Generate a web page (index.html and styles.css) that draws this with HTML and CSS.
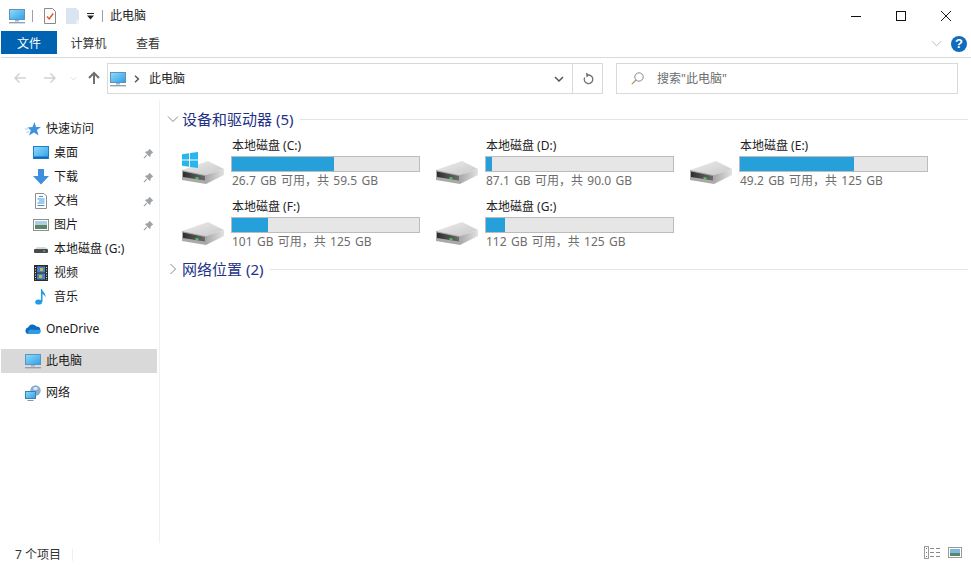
FILE: index.html
```html
<!DOCTYPE html>
<html lang="zh-CN">
<head>
<meta charset="utf-8">
<title>此电脑</title>
<link rel="stylesheet" href="styles.css">
</head>
<body>
<svg class="defs" width="0" height="0" aria-hidden="true">
  <defs>
    <linearGradient id="scr" x1="0" y1="0" x2="1" y2="1"><stop offset="0" stop-color="#8fdcfb"/><stop offset="1" stop-color="#2f9fe8"/></linearGradient>
    <linearGradient id="top" x1="0" y1="0" x2="1" y2="1"><stop offset="0" stop-color="#ededed"/><stop offset="1" stop-color="#c8c8c8"/></linearGradient>
    <linearGradient id="front" x1="0" y1="0" x2="1" y2="0"><stop offset="0" stop-color="#2e2e2e"/><stop offset="1" stop-color="#6a6a6a"/></linearGradient>
    <linearGradient id="side" x1="0" y1="0" x2="1" y2="0"><stop offset="0" stop-color="#a8a8a8"/><stop offset="1" stop-color="#e2e2e2"/></linearGradient>
    <symbol id="pc" viewBox="0 0 16 16">
      <rect x=".5" y="1.5" width="15" height="10" fill="url(#scr)" stroke="#5f93b8"/>
      <rect x="6" y="12" width="4" height="1.5" fill="#9fb4c7"/>
      <rect x="0" y="14" width="16" height="1.4" fill="#8fa3b8"/>
    </symbol>
    <symbol id="drive" viewBox="0 0 44 36">
      <path d="M0 22 L26 13 L42 21 L24 27Z" fill="url(#top)"/>
      <path d="M24 27 L42 21 L42 27 L24 36Z" fill="url(#side)"/>
      <path d="M0 22 L24 27 L24 36 L0 32Z" fill="#a9a9a9"/>
      <path d="M1 23.5 L23 28 L23 32.5 L1 29Z" fill="url(#front)"/>
      <path d="M13.5 29 L16.5 29.5 L16.5 31.2 L13.5 30.8Z" fill="#45d060"/>
    </symbol>
    <symbol id="pin" viewBox="0 0 12 12">
      <path d="M7 .8 L11.2 5 L9.8 5.6 L8.4 7.2 L8.2 9.2 L7.2 9.6 L2.4 4.8 L2.9 3.8 L4.9 3.6 L6.4 2.2Z" fill="#9ca3a8"/>
      <path d="M4.2 7.8 L1 11" stroke="#9ca3a8" stroke-width="1.3" fill="none"/>
    </symbol>
    <symbol id="chev-down" viewBox="0 0 12 12"><path d="M1 3.5 L6 8.5 L11 3.5" fill="none" stroke="currentColor"/></symbol>
    <symbol id="chev-right" viewBox="0 0 12 12"><path d="M3.5 1 L8.5 6 L3.5 11" fill="none" stroke="currentColor"/></symbol>
  </defs>
</svg>
<div class="window">
  <header class="titlebar">
    <svg class="ic-16"><use href="#pc"/></svg>
    <span class="qsep"></span>
    <svg class="ic-doc" viewBox="0 0 12 16">
      <path d="M.5.5 H8.5 L11.5 3.5 V15.5 H.5Z" fill="#fbfbfb" stroke="#8a8a8a"/>
      <path d="M3 8.5 L5.2 11 L9.2 5.5" fill="none" stroke="#e2572b" stroke-width="1.4"/>
    </svg>
    <svg class="ic-doc2" viewBox="0 0 13 16">
      <path d="M0 0 H10 L13 3 V16 H0Z" fill="#dbe4f1"/>
      <path d="M10 12 H13 V16 H10Z" fill="#eef1f6"/>
    </svg>
    <svg class="ic-qat" viewBox="0 0 8 7"><rect x="0" y="0" width="7" height="1" fill="#222"/><path d="M0 2.5 H7 L3.5 6.5Z" fill="#222"/></svg>
    <span class="qsep qsep-2"></span>
    <span class="title-text">此电脑</span>
    <div class="caption">
      <svg class="cap-btn" viewBox="0 0 10 10"><path d="M0 5.5 H10" stroke="#111" fill="none"/></svg>
      <svg class="cap-btn" viewBox="0 0 10 10"><rect x=".5" y=".5" width="9" height="9" fill="none" stroke="#111"/></svg>
      <svg class="cap-btn" viewBox="0 0 10 10"><path d="M0 0 L10 10 M10 0 L0 10" stroke="#111" fill="none" stroke-width=".95"/></svg>
    </div>
  </header>

  <nav class="ribbon">
    <span class="tab tab-file">文件</span>
    <span class="tab tab-a">计算机</span>
    <span class="tab tab-b">查看</span>
    <svg class="ribbon-chev"><use href="#chev-down"/></svg>
    <span class="help">?</span>
  </nav>

  <div class="addressbar">
    <svg class="arrow" viewBox="0 0 14 14"><path d="M13 7 H2 M6.5 2.5 L2 7 L6.5 11.5" fill="none" stroke="#d2d2d2" stroke-width="1.5"/></svg>
    <svg class="arrow" viewBox="0 0 14 14"><path d="M1 7 H12 M7.5 2.5 L12 7 L7.5 11.5" fill="none" stroke="#d2d2d2" stroke-width="1.5"/></svg>
    <svg class="arrow-drop"><use href="#chev-down"/></svg>
    <svg class="arrow arrow-up" viewBox="0 0 14 14"><path d="M7 13 V2 M2 7 L7 2 L12 7" fill="none" stroke="#707070" stroke-width="2"/></svg>
    <div class="addr-box">
      <svg class="ic-16 addr-pc"><use href="#pc"/></svg>
      <svg class="addr-sep" viewBox="0 0 6 8"><path d="M1 .8 L4.4 4 L1 7.2" fill="none" stroke="#555" stroke-width="1.4"/></svg>
      <span class="addr-text">此电脑</span>
      <span class="addr-drop"><svg class="addr-chev" viewBox="0 0 10 6"><path d="M1 1 L5 5 L9 1" fill="none" stroke="#555" stroke-width="1.5"/></svg></span>
      <span class="addr-refresh"><svg class="addr-ref" viewBox="0 0 12 13"><path d="M6.5 3 A4.3 4.3 0 1 1 2.6 5.5" fill="none" stroke="#707070" stroke-width="1.3"/><path d="M4 .5 L7.5 3 L4.5 5.6Z" fill="#707070"/></svg></span>
    </div>
    <div class="search-box">
      <svg class="search-ic" viewBox="0 0 13 13"><circle cx="8" cy="5" r="4.2" fill="none" stroke="#8a8a8a"/><path d="M5 8 L.8 12.2" stroke="#b08f6a" stroke-width="1.2"/></svg>
      <span class="search-text">搜索"此电脑"</span>
    </div>
  </div>

  <div class="main">
    <aside class="sidebar">
      <div class="nav-row nav-head">
        <svg class="nav-ic" viewBox="0 0 16 16"><path d="M9.5 1 L11 6 L16 6 L12 9 L13.5 14.5 L9 11.5 L4 14.5 L5.8 9.2 L2.5 6.5 L7.5 6Z" fill="#3d94dc"/><path d="M0 8 H3 M1 11 H4" stroke="#a5d2f2"/></svg>
        <span>快速访问</span>
      </div>
      <div class="nav-row nav-child">
        <svg class="nav-ic" viewBox="0 0 16 16"><rect x=".5" y="1.5" width="15" height="12" fill="url(#scr)" stroke="#1c7fd0"/><rect x="1" y="11.5" width="14" height="2" fill="#0f6ab8"/></svg>
        <span>桌面</span><svg class="pin"><use href="#pin"/></svg>
      </div>
      <div class="nav-row nav-child">
        <svg class="nav-ic" viewBox="0 0 16 16"><path d="M5 0 H11 V7 H16 L8 15.5 L0 7 H5Z" fill="#3d8fdb"/></svg>
        <span>下载</span><svg class="pin"><use href="#pin"/></svg>
      </div>
      <div class="nav-row nav-child">
        <svg class="nav-ic" viewBox="0 0 16 16"><path d="M2.5.5 H11 L13.5 3 V15.5 H2.5Z" fill="#fff" stroke="#8e8e8e"/><path d="M6 3.5 H10 M4.5 6 H11.5 M6 8 H11.5 M4.5 10 H11.5 M4.5 12.5 H11.5" stroke="#3d94dc"/></svg>
        <span>文档</span><svg class="pin"><use href="#pin"/></svg>
      </div>
      <div class="nav-row nav-child">
        <svg class="nav-ic" viewBox="0 0 16 16"><rect x=".5" y="2.5" width="15" height="11" fill="#fff" stroke="#8e8e8e"/><rect x="2" y="4" width="12" height="4" fill="#a8cfe2"/><rect x="2" y="8" width="12" height="4" fill="#5c8466"/></svg>
        <span>图片</span><svg class="pin"><use href="#pin"/></svg>
      </div>
      <div class="nav-row nav-child">
        <svg class="nav-ic" viewBox="0 0 16 16"><path d="M2 8 L4 6 H12 L15 8Z" fill="#d8d8d8"/><rect x="1" y="8" width="14" height="4" rx="1" fill="#4a4a4a"/><rect x="10" y="9.5" width="2" height="1.2" fill="#45d060"/></svg>
        <span>本地磁盘 (G:)</span>
      </div>
      <div class="nav-row nav-child">
        <svg class="nav-ic" viewBox="0 0 16 16"><rect x="1" y="0" width="14" height="16" fill="#2c2c2c"/><rect x="4" y="1.5" width="8" height="6" fill="#3d86cc"/><rect x="4" y="8.5" width="8" height="6" fill="#3d86cc"/><rect x="7" y="3" width="3" height="3" fill="#d8b13c"/><rect x="6" y="10" width="3" height="3" fill="#d8b13c"/><path d="M2.5 2 V15" stroke="#ddd" stroke-dasharray="1 1.5"/><path d="M13.5 2 V15" stroke="#ddd" stroke-dasharray="1 1.5"/></svg>
        <span>视频</span>
      </div>
      <div class="nav-row nav-child">
        <svg class="nav-ic" viewBox="0 0 16 16"><ellipse cx="5.6" cy="13" rx="3.4" ry="2.6" fill="#1f9be8"/><path d="M8 13 V0 H9 C9.5 3 13 4 12.5 8.5 C12 6.5 10.5 5.5 9.5 5 V13Z" fill="#1f9be8"/></svg>
        <span>音乐</span>
      </div>
      <div class="nav-row nav-head nav-gap">
        <svg class="nav-ic" viewBox="0 0 16 16"><path d="M3.5 13 A3.3 3.3 0 0 1 3 6.5 A5 5 0 0 1 11.5 5.5 A3.8 3.8 0 0 1 12.5 13Z" fill="#0f6cbd"/><path d="M3.5 13 A3 3 0 0 1 5 8.5 L12.5 9 A2.2 2.2 0 0 1 15.8 10.5 A3.2 3.2 0 0 1 12.5 13Z" fill="#2e9be6"/></svg>
        <span>OneDrive</span>
      </div>
      <div class="nav-row nav-head nav-gap nav-selected">
        <svg class="nav-ic"><use href="#pc"/></svg>
        <span>此电脑</span>
      </div>
      <div class="nav-row nav-head nav-gap">
        <svg class="nav-ic" viewBox="0 0 16 16"><circle cx="10.5" cy="5.5" r="5.2" fill="#88add0"/><path d="M8 3 Q11 1 13 3 Q12 6 9 5Z" fill="#dfe9f2"/><rect x=".5" y="6.5" width="10" height="7" fill="url(#scr)" stroke="#3f7fb4"/><path d="M2.5 15.5 H8.5" stroke="#7f96ac"/></svg>
        <span>网络</span>
      </div>
    </aside>

    <section class="content">
      <div class="group">
        <svg class="group-chev"><use href="#chev-down"/></svg>
        <span class="group-title">设备和驱动器 (5)</span>
        <span class="group-line"></span>
      </div>
      <div class="drives">
        <div class="drive">
          <div class="drive-ic">
            <svg class="drive-svg"><use href="#drive"/></svg>
            <svg class="win-logo" viewBox="0 0 16 16"><path d="M0 2.3 L7 1.3 V7.5 H0Z M8 1.1 L16 0 V7.5 H8Z M0 8.5 H7 V14.7 L0 13.7Z M8 8.5 H16 V16 L8 14.9Z" fill="#27b6ee"/></svg>
          </div>
          <div class="drive-info">
            <div class="drive-name">本地磁盘 (C:)</div>
            <div class="bar"><div class="fill" style="width:54.5%"></div></div>
            <div class="drive-free">26.7 GB 可用，共 59.5 GB</div>
          </div>
        </div>
        <div class="drive">
          <div class="drive-ic"><svg class="drive-svg"><use href="#drive"/></svg></div>
          <div class="drive-info">
            <div class="drive-name">本地磁盘 (D:)</div>
            <div class="bar"><div class="fill" style="width:3.2%"></div></div>
            <div class="drive-free">87.1 GB 可用，共 90.0 GB</div>
          </div>
        </div>
        <div class="drive">
          <div class="drive-ic"><svg class="drive-svg"><use href="#drive"/></svg></div>
          <div class="drive-info">
            <div class="drive-name">本地磁盘 (E:)</div>
            <div class="bar"><div class="fill" style="width:61%"></div></div>
            <div class="drive-free">49.2 GB 可用，共 125 GB</div>
          </div>
        </div>
        <div class="drive">
          <div class="drive-ic"><svg class="drive-svg"><use href="#drive"/></svg></div>
          <div class="drive-info">
            <div class="drive-name">本地磁盘 (F:)</div>
            <div class="bar"><div class="fill" style="width:19%"></div></div>
            <div class="drive-free">101 GB 可用，共 125 GB</div>
          </div>
        </div>
        <div class="drive">
          <div class="drive-ic"><svg class="drive-svg"><use href="#drive"/></svg></div>
          <div class="drive-info">
            <div class="drive-name">本地磁盘 (G:)</div>
            <div class="bar"><div class="fill" style="width:10%"></div></div>
            <div class="drive-free">112 GB 可用，共 125 GB</div>
          </div>
        </div>
      </div>
      <div class="group group-net">
        <svg class="group-chev"><use href="#chev-right"/></svg>
        <span class="group-title">网络位置 (2)</span>
        <span class="group-line"></span>
      </div>
    </section>
  </div>

  <footer class="statusbar">
    <span class="status-text">7 个项目</span>
    <span class="status-sep"></span>
    <svg class="view-details" viewBox="0 0 17 13"><rect x=".5" y=".5" width="4" height="12" fill="#fff" stroke="#9a9a9a"/><rect x="2" y="2" width="1" height="1" fill="#777"/><rect x="2" y="6" width="1" height="1" fill="#3d94dc"/><rect x="2" y="10" width="1" height="1" fill="#d04a3a"/><path d="M6 2.5 H10 M12 2.5 H16 M6 6.5 H10 M12 6.5 H16 M6 10.5 H10 M12 10.5 H16" stroke="#8a8a8a"/></svg>
    <svg class="view-large" viewBox="0 0 14 11"><rect x=".5" y=".5" width="13" height="10" fill="#fff" stroke="#9a9a9a"/><rect x="2" y="2" width="10" height="4" fill="#7cb8e0"/><rect x="2" y="6" width="10" height="3" fill="#5c8466"/></svg>
  </footer>
</div>
</body>
</html>
```
FILE: styles.css
```css
* { box-sizing: border-box; }
html, body { margin: 0; padding: 0; background: #fff; }
body {
  font-family: "Noto Sans", "Noto Sans CJK SC", sans-serif;
  font-size: 12px;
  line-height: 16px;
  color: #1a1a1a;
  overflow: hidden;
}
.defs { display: block; height: 0; }
svg { display: block; flex: none; }

.window { width: 971px; height: 566px; display: flex; flex-direction: column; overflow: hidden; }

/* title bar */
.titlebar { height: 31px; display: flex; align-items: center; padding-left: 9px; flex: none; }
.ic-16 { width: 16px; height: 16px; }
.qsep { width: 1px; height: 12px; background: #a0a0a0; margin: 0 11px 0 7px; }
.ic-doc { width: 12px; height: 16px; }
.ic-doc2 { width: 13px; height: 16px; margin-left: 10px; }
.ic-qat { width: 8px; height: 7px; margin-left: 8px; margin-top: 2px; }
.qsep-2 { margin: 0 7px 0 7px; }
.title-text { color: #222; }
.caption { margin-left: auto; display: flex; align-items: center; padding-right: 20px; gap: 35px; }
.cap-btn { width: 10px; height: 10px; }

/* ribbon */
.ribbon {
  height: 27px; flex: none; display: flex; align-items: flex-start;
  margin-left: 1px; border-bottom: 1px solid #dadada;
}
.tab { height: 23px; line-height: 25px; text-align: center; color: #333; }
.tab-file { width: 56px; background: #0063b1; color: #fff; }
.tab-a { width: 63px; }
.tab-b { width: 54px; margin-left: 1px; }
.ribbon-chev { width: 11px; height: 11px; margin-left: auto; margin-top: 7px; color: #b5b5b5; }
.help {
  width: 16px; height: 16px; margin: 5px 4px 0 9px; border-radius: 50%;
  background: #0f6cbd; color: #fff; font: bold 13px/16px "Liberation Sans", sans-serif; text-align: center;
}

/* address bar */
.addressbar { height: 42px; flex: none; display: flex; align-items: flex-start; padding: 5px 13px 0 13px; }
.arrow { width: 14px; height: 14px; margin-top: 8px; margin-right: 16px; }
.arrow-drop { width: 7px; height: 7px; color: #ccc; margin: 12px 10px 0 -3px; }
.arrow-up { margin: 8px 6px 0 0; }
.addr-box {
  width: 496px; height: 31px; border: 1px solid #d9d9d9; display: flex; align-items: center;
  padding-left: 2px;
}
.addr-sep { width: 6px; height: 8px; margin-left: 8px; }
.addr-text { margin-left: 9px; color: #222; }
.addr-drop { margin-left: auto; width: 18px; height: 100%; display: flex; align-items: center; justify-content: flex-start; }
.addr-chev { width: 10px; height: 6px; }
.addr-refresh { width: 30px; height: 100%; border-left: 1px solid #d9d9d9; display: flex; align-items: center; justify-content: center; }
.addr-ref { width: 12px; height: 13px; }
.search-box {
  width: 342px; height: 31px; margin-left: 13px; border: 1px solid #d9d9d9; display: flex; align-items: center;
  padding-left: 14px;
}
.search-ic { width: 13px; height: 13px; }
.search-text { margin-left: 13px; color: #6d6d6d; }

/* main */
.main { flex: 1; display: flex; min-height: 0; }
.sidebar { width: 160px; flex: none; padding: 17px 0 0 1px; border-right: 1px solid #f0f0f0; }
.nav-row { height: 24px; width: 156px; display: flex; align-items: center; color: #1a1a1a; }
.nav-ic { width: 16px; height: 16px; margin-right: 5px; }
.nav-head { padding-left: 24px; }
.nav-child { padding-left: 32px; }
.nav-gap { margin-top: 8px; }
.nav-selected { background: #d9d9d9; }
.pin { width: 11px; height: 11px; margin-left: auto; margin-right: 3px; }

/* content */
.content { flex: 1; padding: 10px 0 0 6px; min-width: 0; }
.group { display: flex; align-items: center; height: 18px; padding-right: 3px; }
.group-chev { width: 12px; height: 12px; color: #8a8a8a; margin-left: 1px; }
.group-title { font-size: 15px; color: #1e3287; margin-left: 3px; line-height: 18px; white-space: nowrap; }
.group-line { flex: 1; height: 1px; background: #e4e4e4; margin-left: 7px; }
.drives { display: grid; grid-template-columns: repeat(3, 254px); grid-auto-rows: 61px; margin-top: 9px; padding-left: 16px; }
.drive { display: flex; }
.drive-ic { width: 49px; flex: none; position: relative; padding-top: 11px; }
.drive-svg { width: 44px; height: 36px; }
.win-logo { position: absolute; left: 0; top: 15px; width: 16px; height: 16px; }
.drive-info { width: 189px; }
.drive-name { color: #222; height: 19px; line-height: 18px; padding-left: 1px; }
.bar { height: 16px; background: #e6e6e6; border: 1px solid #bcbcbc; }
.fill { height: 100%; background: #26a0da; }
.drive-free { color: #6d6d6d; line-height: 17px; padding-left: 1px; word-spacing: 1.2px; }
.group-net { margin-top: 1px; }

/* status */
.statusbar { height: 23px; flex: none; display: flex; align-items: center; padding: 0 9px 0 15px; }
.status-text { color: #333; }
.status-sep { width: 1px; height: 12px; background: #f0f0f0; margin-left: 11px; }
.view-details { width: 17px; height: 13px; margin-left: auto; margin-bottom: 4px; }
.view-large { width: 14px; height: 11px; margin-left: 7px; margin-bottom: 4px; }
```
